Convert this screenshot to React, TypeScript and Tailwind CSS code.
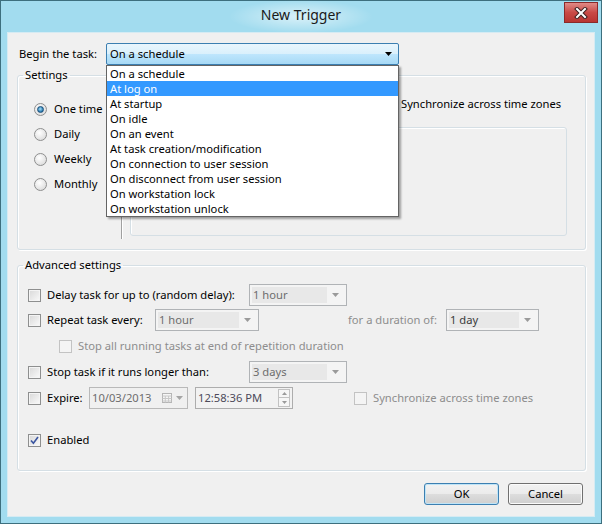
/**
 * NewTriggerDialog
 *
 * Windows 8 style "New Trigger" dialog with the "Begin the task" combo open.
 */
import React from 'react';

// ── Constants ────────────────────────────────────────────────────────────────

const TRIGGER_OPTIONS = [
  'On a schedule',
  'At log on',
  'At startup',
  'On idle',
  'On an event',
  'At task creation/modification',
  'On connection to user session',
  'On disconnect from user session',
  'On workstation lock',
  'On workstation unlock',
];

const HIGHLIGHTED = 'At log on';

// ── Small controls ───────────────────────────────────────────────────────────

function DownArrow({ color = '#000000' }: { color?: string }) {
  return (
    <svg width="7" height="4" viewBox="0 0 7 4">
      <path d="M0 0 L7 0 L3.5 4 Z" fill={color} />
    </svg>
  );
}

function Checkbox({ checked = false, disabled = false }: { checked?: boolean; disabled?: boolean }) {
  return (
    <span
      className={
        disabled
          ? 'w-[13px] h-[13px] shrink-0 border border-[#c3c3c3] bg-[#f4f4f4]'
          : 'w-[13px] h-[13px] shrink-0 border border-[#8e8f8f] bg-gradient-to-br from-[#d8d8d8] to-[#fafafa] shadow-[inset_0_0_0_1px_#f4f4f4] flex items-center justify-center'
      }
    >
      {checked && (
        <svg width="11" height="11" viewBox="0 0 11 11">
          <path d="M2 5.5 L4.4 8.3 L9 2" fill="none" stroke="#3a55a0" strokeWidth="1.6" />
        </svg>
      )}
    </span>
  );
}

function Radio({ checked = false }: { checked?: boolean }) {
  return (
    <span className="w-[13px] h-[13px] shrink-0 rounded-full border border-[#8e8f8f] bg-[radial-gradient(circle_at_40%_35%,#ffffff,#d4d4d4)] flex items-center justify-center">
      {checked && (
        <span className="w-[7px] h-[7px] rounded-full bg-[radial-gradient(circle_at_45%_40%,#a6e1fb,#1c6ea6_75%)] border border-[#1b4f7a]" />
      )}
    </span>
  );
}

function GrayCombo({ value, width, dark = false }: { value: string; width: string; dark?: boolean }) {
  return (
    <div className={`${width} h-[22px] shrink-0 border border-[#b0b3b6] bg-[#f4f4f4] p-[2px] flex`}>
      <div
        className={`flex-1 bg-[#e8e8e8] pl-[1px] flex items-center leading-none ${dark ? 'text-[#3a3a3a]' : 'text-[#6d6d6d]'}`}
      >
        {value}
      </div>
      <div className="w-[17px] flex items-center justify-center">
        <DownArrow color="#9a9a9a" />
      </div>
    </div>
  );
}

function DateBox() {
  return (
    <div className="w-[99px] h-[22px] shrink-0 border border-[#b9b9b9] bg-[#f0f0f0] flex items-center pl-[2px] text-[#6d6d6d]">
      <span className="flex-1 leading-none">10/03/2013</span>
      <svg width="10" height="10" viewBox="0 0 10 10" className="mr-[2px]">
        <rect x="0.5" y="0.5" width="9" height="9" fill="#f6f6f6" stroke="#b5b5b5" />
        <path d="M0.5 3 H9.5 M0.5 5.5 H9.5 M0.5 8 H9.5 M3.3 3 V9.5 M6.6 3 V9.5" stroke="#c8c8c8" />
      </svg>
      <span className="w-[10px] flex items-center justify-center mr-[3px]">
        <DownArrow color="#a5a5a5" />
      </span>
    </div>
  );
}

function TimeBox() {
  return (
    <div className="w-[98px] h-[22px] shrink-0 border border-[#adadad] bg-[#f2f2f2] flex items-center pl-[2px] text-[#4d4a5a]">
      <span className="flex-1 leading-none">12:58:36 PM</span>
      <div className="flex flex-col mr-[2px]">
        <span className="w-[12px] h-[9px] border border-[#c2c2c2] bg-[#f6f6f6] flex items-center justify-center">
          <svg width="5" height="3" viewBox="0 0 5 3">
            <path d="M0 3 L5 3 L2.5 0 Z" fill="#9a9a9a" />
          </svg>
        </span>
        <span className="w-[12px] h-[9px] border border-t-0 border-[#c2c2c2] bg-[#f6f6f6] flex items-center justify-center">
          <svg width="5" height="3" viewBox="0 0 5 3">
            <path d="M0 0 L5 0 L2.5 3 Z" fill="#9a9a9a" />
          </svg>
        </span>
      </div>
    </div>
  );
}

function DialogButton({ label, isDefault = false }: { label: string; isDefault?: boolean }) {
  return (
    <button
      type="button"
      className={
        isDefault
          ? 'w-[75px] h-[22px] rounded-[3px] border border-[#3c7fb1] bg-[linear-gradient(#f2f2f2_0%,#ebebeb_50%,#dddddd_51%,#cfcfcf_100%)] shadow-[inset_0_0_0_1px_#bfe4f7] leading-none'
          : 'w-[75px] h-[22px] rounded-[3px] border border-[#707070] bg-[linear-gradient(#f2f2f2_0%,#ebebeb_50%,#dddddd_51%,#cfcfcf_100%)] shadow-[inset_0_0_0_1px_#fbfbfb] leading-none'
      }
    >
      {label}
    </button>
  );
}

// ── Main component ───────────────────────────────────────────────────────────

export default function App() {
  return (
    <div className="w-[602px] h-[524px] border border-[#3d6f7e] bg-[#a2dcef] flex flex-col px-[6px] pb-[6px] text-[11.2px] text-black font-['Noto_Sans',sans-serif]">
      {/* Title bar */}
      <div className="relative h-[31px] shrink-0 flex items-center justify-center">
        <div className="px-8 py-2 bg-[radial-gradient(closest-side,rgba(255,255,255,0.6),rgba(255,255,255,0))]">
          <span className="text-[14px] text-[#1a1a1a] leading-none">New Trigger</span>
        </div>
        <button
          type="button"
          aria-label="Close"
          className="absolute right-[-3px] top-[1px] w-[34px] h-[21px] border border-[#8a2a2a] bg-[linear-gradient(#e08a86,#c94a46_50%,#b83532)] flex items-center justify-center"
        >
          <svg width="14" height="12" viewBox="0 0 14 12">
            <path d="M3 2 L11 10 M11 2 L3 10" stroke="#3c2020" strokeWidth="4" strokeLinecap="square" />
            <path d="M3 2 L11 10 M11 2 L3 10" stroke="#ffffff" strokeWidth="2" strokeLinecap="square" />
          </svg>
        </button>
      </div>

      {/* Client area */}
      <div className="flex-1 bg-[#f0f0f0] border border-[#d6ebf3] flex flex-col pl-[9px] pr-[8px]">
        {/* Begin the task */}
        <div className="flex items-center pt-[10px]">
          <span className="w-[89px] pl-[2px]">Begin the task:</span>
          <div className="relative z-10">
            <div className="w-[293px] h-[22px] border border-[#3c7fb1] rounded-[2px] bg-[linear-gradient(#eaf6fd_0%,#d9f0fc_50%,#bee6fd_51%,#a7d9f5_100%)] flex items-center pl-[3px] pr-[6px]">
              <span className="flex-1 leading-none">On a schedule</span>
              <DownArrow />
            </div>
            {/* Open list */}
            <ul className="absolute left-0 top-full w-[293px] border border-[#646464] bg-white shadow-[2px_2px_2px_rgba(0,0,0,0.35)]">
              {TRIGGER_OPTIONS.map((opt) => (
                <li
                  key={opt}
                  className={
                    opt === HIGHLIGHTED
                      ? 'h-[15px] pl-[3px] leading-[15px] bg-[#3399ff] text-white'
                      : 'h-[15px] pl-[3px] leading-[15px]'
                  }
                >
                  {opt}
                </li>
              ))}
            </ul>
          </div>
        </div>

        {/* Settings */}
        <fieldset className="mt-[2px] border border-[#d5dfe5] rounded-[3px] shadow-[inset_1px_1px_0_#ffffff,1px_1px_0_#ffffff]">
          <legend className="ml-[5px] px-[2px] leading-[16px]">Settings</legend>
          <div className="flex">
            <div className="w-[103px] pl-[16px] pt-[18px] flex flex-col gap-[9px]">
              {['One time', 'Daily', 'Weekly', 'Monthly'].map((label, i) => (
                <label key={label} className="h-[16px] flex items-center gap-[7px]">
                  <Radio checked={i === 0} />
                  <span className="leading-none">{label}</span>
                </label>
              ))}
            </div>
            <div className="w-[2px] mt-[5px] mb-[10px] border-l border-[#a0a0a0] border-r border-r-white" />
            <div className="ml-[7px] w-[437px] flex flex-col pt-[10px] pb-[13px]">
              {/* Start row: mostly hidden under the open list */}
              <div className="h-[22px] flex items-center">
                <div className="w-[254px]" />
                <span className="flex items-center gap-[4px]">
                  <Checkbox />
                  <span className="leading-none">Synchronize across time zones</span>
                </span>
              </div>
              <div className="mt-[12px] h-[109px] border border-[#d5dfe5] rounded-[3px] shadow-[inset_1px_1px_0_#ffffff]" />
            </div>
          </div>
        </fieldset>

        {/* Advanced settings */}
        <fieldset className="mt-[7px] border border-[#d5dfe5] rounded-[3px] shadow-[inset_1px_1px_0_#ffffff,1px_1px_0_#ffffff]">
          <legend className="ml-[5px] px-[2px] leading-[16px]">Advanced settings</legend>
          <div className="flex flex-col pl-[10px] pt-[11px] pb-[19px]">
            <div className="h-[22px] flex items-center">
              <label className="w-[221px] flex items-center gap-[6px]">
                <Checkbox />
                <span className="leading-none">Delay task for up to (random delay):</span>
              </label>
              <GrayCombo value="1 hour" width="w-[98px]" />
            </div>

            <div className="mt-[3px] h-[22px] flex items-center">
              <label className="w-[127px] flex items-center gap-[6px]">
                <Checkbox />
                <span className="leading-none">Repeat task every:</span>
              </label>
              <GrayCombo value="1 hour" width="w-[104px]" />
              <span className="ml-[89px] w-[98px] text-[#8d8d8d] leading-none">for a duration of:</span>
              <GrayCombo value="1 day" width="w-[93px]" dark />
            </div>

            <div className="mt-[4px] h-[22px] flex items-center pl-[31px] gap-[6px]">
              <Checkbox disabled />
              <span className="text-[#8d8d8d] leading-none">Stop all running tasks at end of repetition duration</span>
            </div>

            <div className="mt-[4px] h-[22px] flex items-center">
              <label className="w-[221px] flex items-center gap-[6px]">
                <Checkbox />
                <span className="leading-none">Stop task if it runs longer than:</span>
              </label>
              <GrayCombo value="3 days" width="w-[98px]" />
            </div>

            <div className="mt-[4px] h-[22px] flex items-center">
              <label className="w-[61px] flex items-center gap-[6px]">
                <Checkbox />
                <span className="leading-none">Expire:</span>
              </label>
              <DateBox />
              <div className="ml-[7px]">
                <TimeBox />
              </div>
              <span className="ml-[61px] flex items-center gap-[6px]">
                <Checkbox disabled />
                <span className="text-[#8d8d8d] leading-none">Synchronize across time zones</span>
              </span>
            </div>

            <div className="mt-[20px] h-[22px] flex items-center gap-[6px]">
              <Checkbox checked />
              <span className="leading-none">Enabled</span>
            </div>
          </div>
        </fieldset>

        {/* Buttons */}
        <div className="mt-[12px] flex justify-end gap-[9px] pr-[3px]">
          <DialogButton label="OK" isDefault />
          <DialogButton label="Cancel" />
        </div>
      </div>
    </div>
  );
}
